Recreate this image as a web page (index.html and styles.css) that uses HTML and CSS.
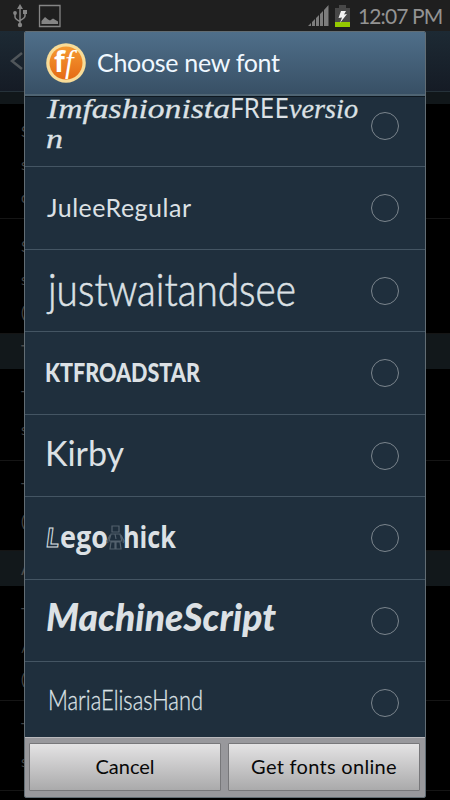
FILE: index.html
```html
<!DOCTYPE html>
<html lang="en">
<head>
    <meta charset="UTF-8">
    <meta name="viewport" content="width=device-width, initial-scale=1.0">
    <title>Choose new font</title>
    <link rel="stylesheet" href="styles.css">
</head>
<body>
    <div class="statusbar">
        <svg class="usb" width="16" height="26" viewBox="0 0 16 26">
            <path d="M8 5v17M3 11v3q0 2 5 4.500M13 11v2q0 2-5 4.500" fill="none" stroke="#858585" stroke-width="1.500"/>
            <path d="M8 1l3 5H5z" fill="#858585"/>
            <circle cx="8" cy="22" r="2.200" fill="#858585"/>
            <circle cx="3" cy="10" r="1.900" fill="#858585"/>
            <path d="M11 7h4v4h-4z" fill="#858585"/>
        </svg>
        <svg class="picture" width="24" height="24" viewBox="0 0 24 24">
            <path d="M1.500 1.500h20.500v21H1.500z" fill="none" stroke="#858585" stroke-width="1.300"/>
            <path d="M3.500 20v-3l3.500-4 3 2.500 2 1 3-2 5 3v2.500z" fill="#858585"/>
        </svg>
        <svg class="signal" width="21" height="21" viewBox="0 0 21 21">
            <path d="M0 21l3-3v3zM4 21v-4l3-3v7zM8 21v-8l3-3v11zM12 21V9l3-3v15zM16 21V5l4.500-5v21z" fill="#7d7d7d"/>
        </svg>
        <svg class="battery" width="15" height="22" viewBox="0 0 15 22">
            <path d="M0 3h4V0h7v3h4v14H0z" fill="#484848"/>
            <path d="M0 17h15v5H0z" fill="#94c900"/>
            <path d="M6 6h5L9 9.500l3-.5-7 9 2-5.500-3.500.5z" fill="#f4f4f4"/>
        </svg>
        <span class="clock">12:07 PM</span>
    </div>

    <!-- settings screen, dimmed behind the dialog -->
    <div class="screen">
        <div class="actionbar">
            <svg width="13" height="20" viewBox="0 0 13 20"><path d="M12 2L2 10l10 8" fill="none" stroke="#50565a" stroke-width="2.500"/></svg>
        </div>
        <div class="strip"></div>
        <div class="setting tall"><b>S</b><i>s</i><i>o</i></div>
        <div class="setting tall"><b>S</b><i>s</i><i>(</i></div>
        <div class="section">T</div>
        <div class="setting mid"><b>T</b><i>s</i></div>
        <div class="setting low"><b>T</b><i>(</i></div>
        <div class="section">A</div>
        <div class="setting tall"><b>T</b><i>/</i><i>(</i></div>
        <div class="setting low"><b>T</b><i>s</i></div>
    </div>

    <div class="dialog">
        <div class="header">
            <svg class="logo" width="40" height="40" viewBox="0 0 40 40">
                <defs>
                    <linearGradient id="orange" x1="0" y1="0" x2="0" y2="1">
                        <stop offset="0" stop-color="#f59a32"/>
                        <stop offset="1" stop-color="#e56a14"/>
                    </linearGradient>
                </defs>
                <circle cx="20" cy="20" r="19.800" fill="#f8dc98"/>
                <circle cx="20" cy="20" r="16.500" fill="url(#orange)"/>
                <text class="f-bold" x="8" y="29">f</text>
                <text class="f-thin" x="19" y="29">f</text>
            </svg>
            <h1>Choose new font</h1>
        </div>

        <div class="list">
            <div class="row first">
                <svg class="sample" viewBox="0 0 320 82">
                    <text class="fashion" x="1" y="33" textLength="183" lengthAdjust="spacingAndGlyphs">Imfashionista</text>
                    <text class="free" x="184" y="33" textLength="59" lengthAdjust="spacingAndGlyphs">FREE</text>
                    <text class="fashion" x="243" y="33" textLength="69" lengthAdjust="spacingAndGlyphs">versio</text>
                    <text class="fashion" x="0" y="62.500" textLength="17" lengthAdjust="spacingAndGlyphs">n</text>
                </svg>
                <span class="radio"></span>
            </div>
            <div class="row">
                <svg class="sample" viewBox="0 0 320 82">
                    <text class="julee" x="1" y="50" textLength="144" lengthAdjust="spacing">JuleeRegular</text>
                </svg>
                <span class="radio"></span>
            </div>
            <div class="row">
                <svg class="sample" viewBox="0 0 320 82">
                    <text class="wait" x="2" y="55.500" textLength="248" lengthAdjust="spacingAndGlyphs">justwaitandsee</text>
                </svg>
                <span class="radio"></span>
            </div>
            <div class="row">
                <svg class="sample" viewBox="0 0 320 82">
                    <text class="roadstar" x="-1" y="50" textLength="155" lengthAdjust="spacingAndGlyphs">KTFROADSTAR</text>
                </svg>
                <span class="radio"></span>
            </div>
            <div class="row">
                <svg class="sample" viewBox="0 0 320 82">
                    <text class="kirby" x="-1" y="50.500" textLength="79" lengthAdjust="spacing">Kirby</text>
                </svg>
                <span class="radio"></span>
            </div>
            <div class="row">
                <svg class="sample" viewBox="0 0 320 82">
                    <text class="lego-l" x="0" y="50">L</text>
                    <text class="lego" x="14" y="50.500" textLength="48" lengthAdjust="spacingAndGlyphs">ego</text>
                    <g class="minifig">
                        <path d="M66 29h7v6h-7zM65 37h9l2 7H63zM65 45h4v7h-5zM70 45h4l1 7h-5zM64 38l-3 6 1 2M75 38l3 6-1 2"/>
                        <path d="M69 37l1 5"/>
                    </g>
                    <text class="lego" x="77" y="50.500" textLength="53" lengthAdjust="spacingAndGlyphs">hick</text>
                </svg>
                <span class="radio"></span>
            </div>
            <div class="row">
                <svg class="sample" viewBox="0 0 320 82">
                    <text class="machine" x="0" y="51" textLength="230" lengthAdjust="spacingAndGlyphs">MachineScript</text>
                </svg>
                <span class="radio"></span>
            </div>
            <div class="row">
                <svg class="sample" viewBox="0 0 320 82">
                    <text class="maria" x="2" y="48" textLength="155" lengthAdjust="spacingAndGlyphs">MariaElisasHand</text>
                </svg>
                <span class="radio"></span>
            </div>
        </div>

        <div class="buttons">
            <button class="cancel">Cancel</button>
            <button class="online">Get fonts online</button>
        </div>
    </div>
</body>
</html>
```
FILE: styles.css
```css
* { box-sizing: border-box; }
body { margin: 0; width: 450px; height: 800px; overflow: hidden; position: relative; background: #000; font-family: Lato, "Open Sans", sans-serif; }

.statusbar { height: 31px; display: flex; align-items: center; background: #1f1f1f; padding: 0 8px 0 12px; }
.picture { margin-left: 10px; }
.signal { margin-left: auto; }
.battery { margin-left: 6px; }
.clock { margin-left: 8px; width: 84px; font-size: 21px; line-height: 30px; letter-spacing: -0.9px; color: #939393; white-space: nowrap; }

.screen { height: 769px; }
.actionbar { height: 61px; padding: 20px 0 0 10px; background: linear-gradient(#1d2a34, #151b25); border-bottom: 1px solid #26323a; }
.strip { height: 12px; background: #11171a; }
.setting { padding: 18px 0 0 21px; border-bottom: 1px solid #151515; color: #444; font-size: 15px; line-height: 18px; overflow: hidden; }
.setting b, .setting i { display: block; font-style: normal; font-weight: 400; margin-bottom: 15px; }
.tall { height: 115px; }
.mid { height: 92px; }
.low { height: 90px; }
.section { height: 35px; padding-left: 21px; line-height: 34px; font-size: 18px; background: #12181b; color: #4a4a4a; }

/* the dialog lies over the dimmed screen */
.dialog { position: absolute; left: 24px; top: 31px; width: 402px; height: 767px; display: flex; flex-direction: column; border: 1px solid #626d74; border-radius: 2px; background: #1f2f3d; overflow: hidden; }
.header { height: 64px; flex: none; display: flex; align-items: center; padding-left: 21px; background: linear-gradient(#4f6f8a, #385065); border-bottom: 2px solid #4f6473; box-shadow: 0 1px 0 #0e1820; position: relative; }
.logo { display: block; }
.f-bold { font: bold 28px "Open Sans", sans-serif; fill: #fff; }
.f-thin { font: italic 31px "Liberation Serif", serif; fill: #fff; }
.header h1 { margin: -2px 0 0 11px; font-size: 25px; font-weight: 400; letter-spacing: -0.3px; color: #f0f8ff; white-space: nowrap; }

.list { height: 641px; flex: none; overflow: hidden; }
.row { height: 82.5px; display: flex; align-items: center; padding: 1px 26px 0 21px; border-bottom: 1px solid #445563; }
.row.first { margin-top: -11.5px; }
.sample { width: 320px; height: 82px; flex: none; overflow: visible; fill: #dce1e5; }
.radio { width: 28px; height: 28px; margin-left: auto; border: 1px solid #7b858d; border-radius: 50%; }

.fashion { font: italic 28px "Liberation Serif", serif; stroke: #dce1e5; stroke-width: 0.3; }
.free { font: 27px "Noto Sans", sans-serif; }
.julee { font: 25px Lato, sans-serif; }
.wait { font: 300 46px Lato, sans-serif; stroke: #dce1e5; stroke-width: 0.6; }
.roadstar { font: 900 27px Lato, sans-serif; }
.kirby { font: 34px Lato, sans-serif; }
.lego { font: bold 30px "Open Sans", sans-serif; }
.lego-l { font: italic bold 27px Lato, sans-serif; fill: none; stroke: #dce1e5; stroke-width: 1; }
.minifig { fill: none; stroke: #53616d; stroke-width: 1.2; }
.machine { font: italic 900 37px Lato, sans-serif; }
.maria { font: 300 27px Lato, sans-serif; stroke: #dce1e5; stroke-width: 0.3; }

.buttons { flex: 1; display: flex; gap: 7px; padding: 5px 5px 6px 4px; background: #98989c; border-top: 1px solid #b9b9bd; }
.buttons button { flex: 1; padding: 0 0 2px; border: 1px solid #77777a; border-radius: 1px; background: linear-gradient(#e4e3e4, #aaaaab); font-family: Lato, sans-serif; font-size: 20px; color: #080808; white-space: nowrap; }
.buttons .online { letter-spacing: 0.3px; }
```
